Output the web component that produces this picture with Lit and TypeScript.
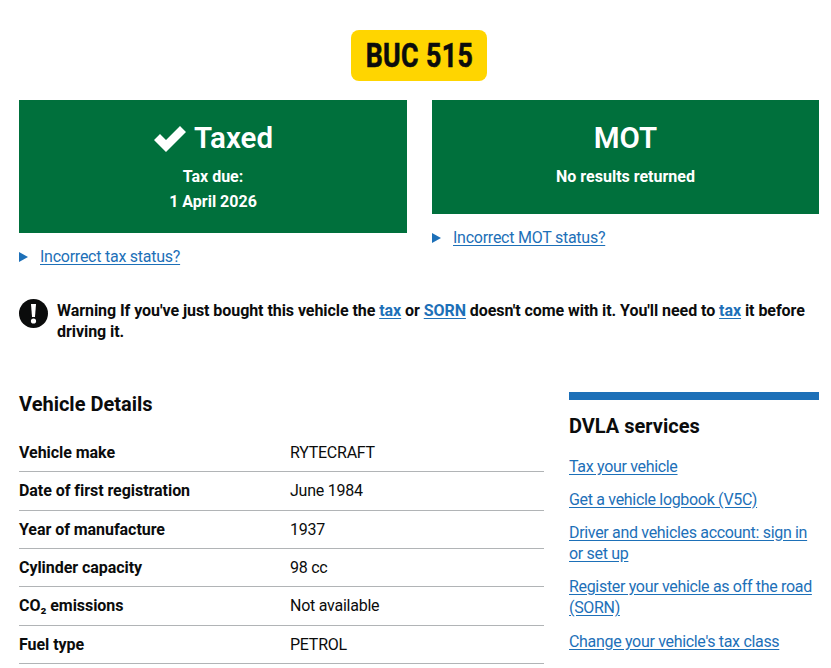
import { LitElement, html, css } from "lit";
import { customElement } from "lit/decorators.js";

const rows: [string, string][] = [
  ["Vehicle make", "RYTECRAFT"],
  ["Date of first registration", "June 1984"],
  ["Year of manufacture", "1937"],
  ["Cylinder capacity", "98 cc"],
  ["CO₂ emissions", "Not available"],
  ["Fuel type", "PETROL"],
];

@customElement("app-root")
export class AppRoot extends LitElement {
  static styles = css`
    :host {
      display: block;
      height: 668px;
      overflow: hidden;
      background: #fff;
      color: #0b0c0c;
      font-family: Roboto, "Noto Sans", sans-serif;
      font-size: 16px;
      line-height: 21px;
      letter-spacing: -0.25px;
    }
    a { color: #1d70b8; text-decoration: underline; text-underline-offset: 2px; }
    .page { padding: 30px 12px 0 19px; }
    .plate-row { display: flex; justify-content: center; }
    .plate {
      width: 136px; height: 51px; box-sizing: border-box;
      background: #ffd500; border-radius: 8px;
      display: flex; align-items: center; justify-content: center;
      font: 700 33px/1 Roboto, sans-serif;
      letter-spacing: 0.5px;
      color: #0b0c0c;
    }
    .plate span { display: block; white-space: nowrap; transform: scaleX(0.81); -webkit-text-stroke: 0.6px #0b0c0c; }
    .status { display: grid; grid-template-columns: 388px 387px; column-gap: 25px; margin-top: 19px; align-items: start; }
    .panel { background: #00703c; color: #fff; text-align: center; box-sizing: border-box; padding-top: 21px; }
    .panel h2 { margin: 0 0 8px; font-size: 29.5px; line-height: 35px; font-weight: 600; letter-spacing: 0; display: flex; justify-content: center; align-items: center; gap: 7px; }
    .panel p { margin: 0; line-height: 25px; font-weight: 700; letter-spacing: 0; }
    .panel.tax { height: 133px; }
    .panel.mot { height: 114px; }
    .disc { display: flex; align-items: center; gap: 12px; margin-top: 12px; line-height: 24px; }
    .tri { width: 0; height: 0; border-left: 9px solid #1d70b8; border-top: 5px solid transparent; border-bottom: 5px solid transparent; }
    .warning { display: flex; gap: 9px; margin-top: 30px; }
    .warning .bang { flex: none; width: 29px; height: 29px; }
    .warning p { margin: 0; padding-top: 1px; line-height: 21px; font-weight: 700; letter-spacing: -0.06px; }
    .main { display: grid; grid-template-columns: 525px 250px; column-gap: 25px; margin-top: 50px; }
    h3 { margin: 0; font-size: 20px; line-height: 25px; font-weight: 700; letter-spacing: 0; }
    .details h3 { margin-bottom: 17px; }
    .row { display: grid; grid-template-columns: 271px 1fr; height: 38.33px; box-sizing: border-box; align-items: center; border-bottom: 1px solid #b1b4b6; }
    .row b { font-weight: 700; letter-spacing: -0.05px; }
    .side { border-top: 8px solid #1d70b8; }
    .side h3 { margin-top: 14px; margin-bottom: 16.5px; }
    .side a { display: block; margin-bottom: 12px; letter-spacing: -0.32px; }
    .side a:nth-of-type(3) { margin-bottom: 12.5px; }
    .side a:nth-of-type(4) { margin-bottom: 12.5px; }
    .side a:nth-of-type(5) { margin-bottom: 13.5px; }
  `;

  render() {
    return html`<div class="page">
      <div class="plate-row"><div class="plate"><span>BUC 515</span></div></div>
      <div class="status">
        <div>
          <div class="panel tax">
            <h2>
              <svg width="34" height="28" viewBox="0 0 34 28"><path d="M1 15l6-6 6 6L27 1l6 6-20 20z" fill="#fff"/></svg>
              Taxed
            </h2>
            <p>Tax due:</p>
            <p>1 April 2026</p>
          </div>
          <div class="disc"><span class="tri"></span><a href="#">Incorrect tax status?</a></div>
        </div>
        <div>
          <div class="panel mot">
            <h2>MOT</h2>
            <p>No results returned</p>
          </div>
          <div class="disc"><span class="tri"></span><a href="#">Incorrect MOT status?</a></div>
        </div>
      </div>
      <div class="warning">
        <svg class="bang" viewBox="0 0 29 29"><circle cx="14.5" cy="14.5" r="14.5" fill="#0b0c0c"/><path d="M12 5h5l-1 13h-3z" fill="#fff"/><circle cx="14.5" cy="22" r="2.6" fill="#fff"/></svg>
        <p>Warning If you've just bought this vehicle the <a href="#">tax</a> or <a href="#">SORN</a> doesn't come with it. You'll need to <a href="#">tax</a> it before driving it.</p>
      </div>
      <div class="main">
        <div class="details">
          <h3>Vehicle Details</h3>
          ${rows.map(([k, v]) => html`<div class="row"><b>${k}</b><span>${v}</span></div>`)}
        </div>
        <aside class="side">
          <h3>DVLA services</h3>
          <a href="#">Tax your vehicle</a>
          <a href="#">Get a vehicle logbook (V5C)</a>
          <a href="#">Driver and vehicles account: sign in or set up</a>
          <a href="#">Register your vehicle as off the road (SORN)</a>
          <a href="#">Change your vehicle's tax class</a>
          <a href="#">Tell DVLA you've sold or bought a vehicle</a>
        </aside>
      </div>
    </div>`;
  }
}
